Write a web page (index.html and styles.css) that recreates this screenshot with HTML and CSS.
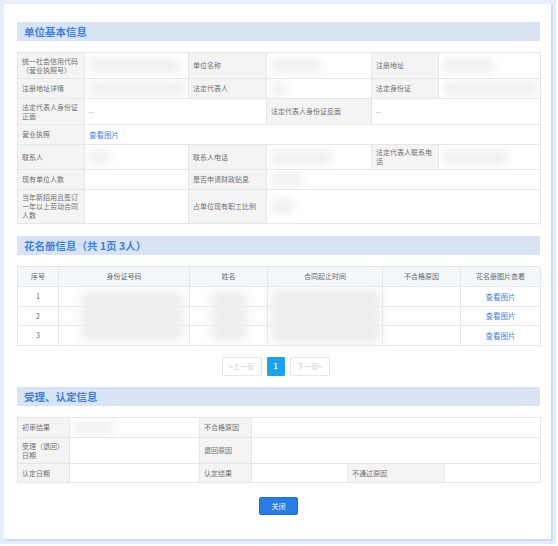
FILE: index.html
```html
<!DOCTYPE html>
<html lang="zh-CN">
<head>
<meta charset="utf-8">
<title>详情</title>
<link rel="stylesheet" href="styles.css">
</head>
<body>
<div class="frame">
  <div class="inner">
    <div class="sec-title">单位基本信息</div>
    <table class="grid t1">
      <colgroup><col class="c67"><col class="c104"><col class="c78"><col class="c105"><col class="c67"><col class="c102"></colgroup>
      <tr class="h26">
        <td class="lb">统一社会信用代码<br>（营业执照号）</td>
        <td><span class="blur b90"></span></td>
        <td class="lb">单位名称</td>
        <td><span class="blur b50"></span></td>
        <td class="lb">注册地址</td>
        <td><span class="blur b50"></span></td>
      </tr>
      <tr class="h20">
        <td class="lb">注册地址详情</td>
        <td><span class="blur b96"></span></td>
        <td class="lb">法定代表人</td>
        <td><span class="blur b15"></span></td>
        <td class="lb">法定身份证</td>
        <td><span class="blur b96"></span></td>
      </tr>
      <tr class="h26">
        <td class="lb">法定代表人身份证<br>正面</td>
        <td colspan="2" class="dash">--</td>
        <td class="lb">法定代表人身份证反面</td>
        <td colspan="2" class="dash">--</td>
      </tr>
      <tr class="h20">
        <td class="lb">营业执照</td>
        <td colspan="5"><a class="link" href="#">查看图片</a></td>
      </tr>
      <tr class="h25">
        <td class="lb">联系人</td>
        <td><span class="blur b20"></span></td>
        <td class="lb">联系人电话</td>
        <td><span class="blur b60"></span></td>
        <td class="lb">法定代表人联系电<br>话</td>
        <td><span class="blur b64"></span></td>
      </tr>
      <tr class="h20">
        <td class="lb">现有单位人数</td>
        <td></td>
        <td class="lb">是否申请财政贴息</td>
        <td colspan="3"><span class="blur b30"></span></td>
      </tr>
      <tr class="h34">
        <td class="lb">当年新招用且签订<br>一年以上劳动合同<br>人数</td>
        <td></td>
        <td class="lb">占单位现有职工比例</td>
        <td colspan="3"><span class="blur b22"></span></td>
      </tr>
    </table>

    <div class="sec-title">花名册信息（共 1页 3人）</div>
    <div class="roster">
      <table class="grid t2">
        <colgroup><col class="c41"><col class="c131"><col class="c78"><col class="c115"><col class="c78"><col class="c80"></colgroup>
        <tr class="h20 head">
          <th>序号</th><th>身份证号码</th><th>姓名</th><th>合同起止时间</th><th>不合格原因</th><th>花名册图片查看</th>
        </tr>
        <tr class="h20"><td class="ct">1</td><td></td><td></td><td></td><td></td><td class="ct"><a class="link" href="#">查看图片</a></td></tr>
        <tr class="h19"><td class="ct">2</td><td></td><td></td><td></td><td></td><td class="ct"><a class="link" href="#">查看图片</a></td></tr>
        <tr class="h20"><td class="ct">3</td><td></td><td></td><td></td><td></td><td class="ct"><a class="link" href="#">查看图片</a></td></tr>
      </table>
      <span class="mask m-id"></span>
      <span class="mask m-name"></span>
      <span class="mask m-date"></span>
    </div>

    <div class="pager">
      <span class="pg off">&lt;上一页</span>
      <span class="pg cur">1</span>
      <span class="pg off">下一页&gt;</span>
    </div>

    <div class="sec-title">受理、认定信息</div>
    <table class="grid t3">
      <colgroup><col class="c52"><col class="c130"><col class="c52"><col class="c96"><col class="c97"><col class="c96"></colgroup>
      <tr class="h20">
        <td class="lb">初审结果</td>
        <td><span class="blur b40 soft"></span></td>
        <td class="lb">不合格原因</td>
        <td colspan="3"></td>
      </tr>
      <tr class="h26">
        <td class="lb">受理（退回）<br>日期</td>
        <td></td>
        <td class="lb">退回原因</td>
        <td colspan="3"></td>
      </tr>
      <tr class="h19">
        <td class="lb">认定日期</td>
        <td></td>
        <td class="lb">认定结果</td>
        <td></td>
        <td class="lb">不通过原因</td>
        <td></td>
      </tr>
    </table>

    <div class="actions">
      <button class="btn" type="button">关闭</button>
    </div>
  </div>
</div>
</body>
</html>
```

FILE: styles.css
```css
html, body {
  margin: 0;
  padding: 0;
  background: #ffffff;
}
body {
  font-family: "Noto Sans CJK SC", "Noto Sans", "DejaVu Sans", sans-serif;
  color: #666666;
}
.frame {
  width: 556px;
  height: 544px;
  box-sizing: border-box;
  padding: 4px 3px 3px 4px;
  background: #e6eefb;
}
.inner {
  height: 100%;
  box-sizing: border-box;
  background: #ffffff;
  border-right: 2px solid #cddcf4;
  border-bottom: 2px solid #cddcf4;
  padding: 18px 9px 0 13px;
  display: flex;
  flex-direction: column;
}
.sec-title {
  width: 523px;
  height: 19px;
  box-sizing: border-box;
  background: #d8e4f4;
  color: #3f80d8;
  font-weight: bold;
  font-size: 10.5px;
  line-height: 19px;
  padding-left: 7px;
  margin-bottom: 11px;
}
.grid {
  width: 523px;
  table-layout: fixed;
  border-collapse: collapse;
  font-size: 7px;
  line-height: 9px;
}
.grid td, .grid th {
  border: 1px solid #e6e6e6;
  padding: 0 4px;
  vertical-align: middle;
  overflow: hidden;
  font-weight: normal;
}
.t1 { margin-bottom: 12px; }
.t3 { margin-bottom: 14px; }
.lb {
  background: #f4f4f4;
  color: #707070;
}
.dash { color: #999999; }
.ct { text-align: center; }
.head th {
  background: #f4f8fd;
  color: #666666;
  text-align: center;
}
.h19 { height: 19px; }
.h20 { height: 20px; }
.h25 { height: 25px; }
.h26 { height: 26px; }
.h34 { height: 34px; }
.c41 { width: 41px; }
.c52 { width: 52px; }
.c67 { width: 67px; }
.c78 { width: 78px; }
.c80 { width: 80px; }
.c96 { width: 96px; }
.c97 { width: 97px; }
.c102 { width: 102px; }
.c104 { width: 104px; }
.c105 { width: 105px; }
.c115 { width: 115px; }
.c130 { width: 130px; }
.c131 { width: 131px; }
.link {
  color: #3d87e0;
  text-decoration: none;
  font-size: 7.5px;
}
.blur {
  display: block;
  height: 15px;
  background: #f0f0f0;
  filter: blur(4px);
  border-radius: 4px;
}
.blur.soft { background: #f2f2f2; }
.b15 { width: 15px; }
.b20 { width: 20px; }
.b22 { width: 22px; }
.b30 { width: 30px; }
.b40 { width: 40px; }
.b50 { width: 50px; }
.b60 { width: 60px; }
.b64 { width: 64px; }
.b90 { width: 90px; }
.b96 { width: 96px; }
.roster {
  position: relative;
  width: 523px;
  margin-bottom: 11px;
}
.mask {
  position: absolute;
  background: #eeeeee;
  filter: blur(5px);
  border-radius: 6px;
}
.m-id { left: 64px; top: 25px; width: 102px; height: 50px; }
.m-name { left: 194px; top: 25px; width: 36px; height: 50px; }
.m-date { left: 254px; top: 23px; width: 110px; height: 54px; }
.pager {
  width: 523px;
  display: flex;
  justify-content: center;
  gap: 5px;
  margin-bottom: 11px;
  padding-right: 6px;
  box-sizing: border-box;
}
.pg {
  height: 19px;
  box-sizing: border-box;
  line-height: 17px;
  font-size: 7px;
  border: 1px solid #e8e8e8;
  border-radius: 1px;
  text-align: center;
}
.pg.off {
  width: 40px;
  color: #cccccc;
  background: #ffffff;
}
.pg.cur {
  width: 18px;
  background: #1fa2ea;
  border-color: #1fa2ea;
  color: #ffffff;
  font-weight: bold;
}
.actions {
  width: 523px;
  display: flex;
  justify-content: center;
}
.btn {
  width: 39px;
  height: 18px;
  box-sizing: border-box;
  padding: 0;
  background: #2a7be2;
  border: 1px solid #1e6ad0;
  border-radius: 2px;
  color: #ffffff;
  font-family: "Noto Sans CJK SC", "Noto Sans", sans-serif;
  font-size: 7px;
  line-height: 16px;
}
```
